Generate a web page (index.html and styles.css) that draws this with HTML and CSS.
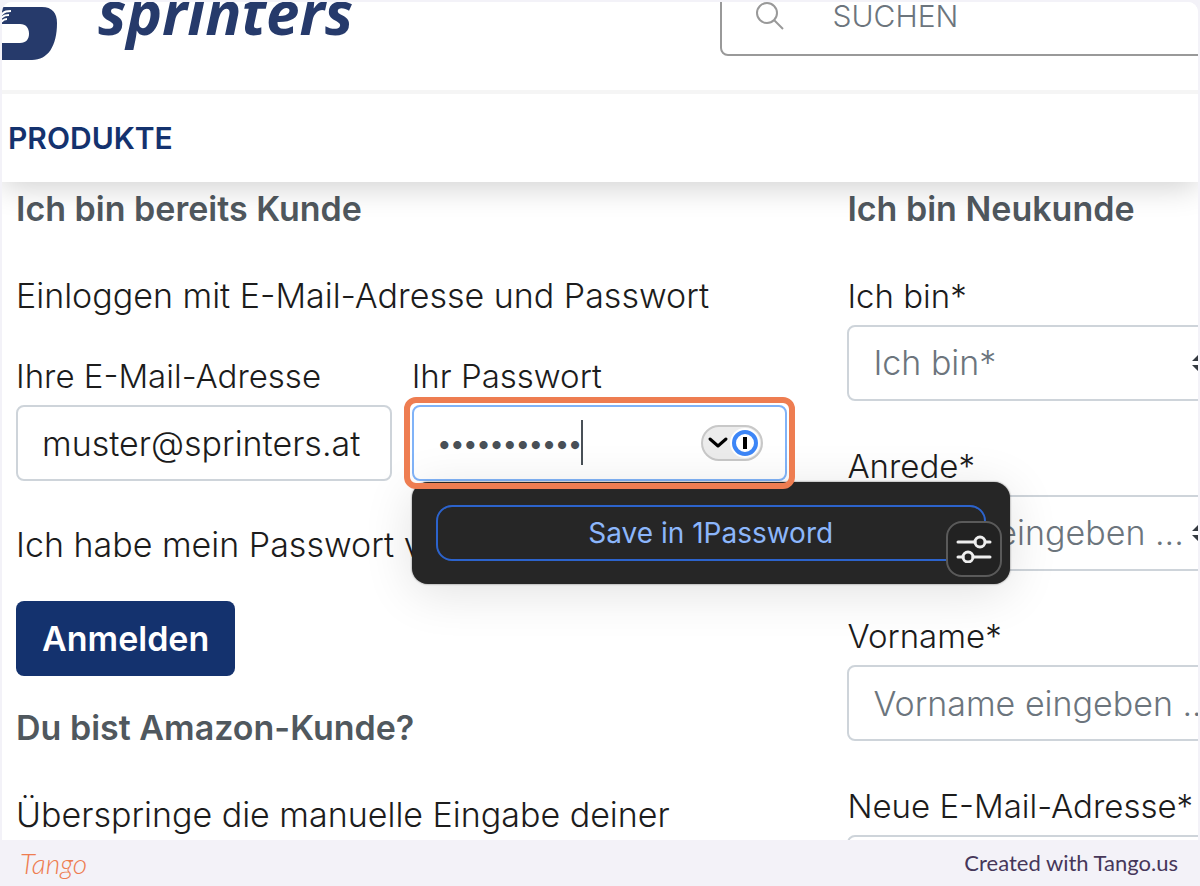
FILE: index.html
```html
<!DOCTYPE html>
<html lang="de">
<head>
  <meta charset="UTF-8">
  <meta name="viewport" content="width=device-width, initial-scale=1.0">
  <title>Sprinters - Anmelden</title>
  <link rel="stylesheet" href="styles.css">
</head>
<body>

  <div class="page">

    <!-- Header -->
    <header class="header">
      <a href="#" class="logo">
        <svg class="logo-mark" width="56" height="56" viewBox="0 0 56 56" aria-hidden="true">
          <path fill="#263a6b" d="M0 1 H40 C50 1 55 7 55 17 C55 40 46 54 30 54 H0 V37 H18 C24 37 27 33 27 28 C27 22 24 18 18 18 H0 Z"/>
          <path fill="none" stroke="#fff" stroke-width="2" d="M-1 9 C3 5 5 5 9 5 M-1 12 C3 9 4 9 7 9 M-1 16 C2 13 3 13 5 13"/>
        </svg>
        <span class="logo-text">sprinters</span>
      </a>
      <div class="search">
        <svg width="30" height="30" viewBox="0 0 30 30" fill="none" stroke="#999" stroke-width="2" aria-hidden="true">
          <circle cx="12" cy="12" r="10"/>
          <path d="M19 19 L28 28"/>
        </svg>
        <input type="search" class="search-input" placeholder="SUCHEN" aria-label="Suchen">
      </div>
    </header>

    <nav class="nav">
      <a href="#">PRODUKTE</a>
    </nav>

    <main class="content">

      <!-- Login -->
      <section class="login">
        <h2>Ich bin bereits Kunde</h2>
        <p class="intro">Einloggen mit E-Mail-Adresse und Passwort</p>

        <form class="login-form">
          <div class="login-fields">
            <div class="field">
              <label for="email">Ihre E-Mail-Adresse</label>
              <input type="email" id="email" class="control" value="muster@sprinters.at">
            </div>

            <div class="field">
              <label for="password">Ihr Passwort</label>
              <div class="password-box">
                <input type="password" id="password" class="control password" value="abcdefghijk">
                <span class="caret"></span>
                <button type="button" class="op-toggle" aria-label="1Password">
                  <svg width="62" height="36" viewBox="0 0 62 36" fill="none">
                    <rect x="1" y="1" width="60" height="34" rx="17" fill="#ececec" stroke="#c8c8c8" stroke-width="2"/>
                    <path d="M9 14 L17 21 L25 14" stroke="#000" stroke-width="3" stroke-linecap="round" stroke-linejoin="round"/>
                    <circle cx="44" cy="18" r="15" fill="#fff"/>
                    <circle cx="44" cy="18" r="11" stroke="#3d86f7" stroke-width="4"/>
                    <rect x="42" y="12" width="4" height="12" fill="#000"/>
                  </svg>
                </button>

                <div class="op-menu">
                  <button type="button" class="op-save">Save in 1Password</button>
                  <button type="button" class="op-settings" aria-label="Settings">
                    <svg width="36" height="28" viewBox="0 0 36 28" fill="none" stroke="#eee" stroke-width="3" stroke-linecap="round">
                      <path d="M2 7 H19 M30 7 H34 M2 22 H7 M17 22 H34"/>
                      <circle cx="24" cy="7" r="5"/>
                      <circle cx="12" cy="22" r="5"/>
                    </svg>
                  </button>
                </div>
                <span class="highlight"></span>
              </div>
            </div>
          </div>

          <p class="forgot">Ich habe mein Passwort vergessen</p>
          <button type="submit" class="submit">Anmelden</button>
        </form>

        <h2 class="amazon">Du bist Amazon-Kunde?</h2>
        <p>Überspringe die manuelle Eingabe deiner</p>
      </section>

      <!-- Registration -->
      <section class="register">
        <h2>Ich bin Neukunde</h2>

        <form class="register-form">
          <div class="field">
            <label for="type">Ich bin*</label>
            <div class="select-box">
              <select id="type" class="control">
                <option>Ich bin*</option>
              </select>
              <svg class="arrows" width="16" height="20" viewBox="0 0 16 20" fill="#343a40" aria-hidden="true">
                <path d="M0 8 L8 0 L16 8 Z M0 12 L8 20 L16 12 Z"/>
              </svg>
            </div>
          </div>
          <div class="field">
            <label for="salutation">Anrede*</label>
            <div class="select-box">
              <select id="salutation" class="control">
                <option>Anrede eingeben ...</option>
              </select>
              <svg class="arrows" width="16" height="20" viewBox="0 0 16 20" fill="#343a40" aria-hidden="true">
                <path d="M0 8 L8 0 L16 8 Z M0 12 L8 20 L16 12 Z"/>
              </svg>
            </div>
          </div>
          <div class="field">
            <label for="firstname">Vorname*</label>
            <input type="text" id="firstname" class="control" placeholder="Vorname eingeben ...">
          </div>
          <div class="field">
            <label for="newmail">Neue E-Mail-Adresse*</label>
            <input type="email" id="newmail" class="control">
          </div>
        </form>
      </section>

    </main>
  </div>

  <footer class="footer">
    <span class="tango">Tango</span>
    <span class="credit">Created with Tango.us</span>
  </footer>

</body>
</html>
```
FILE: styles.css
```css
* {
  box-sizing: border-box;
}

body {
  margin: 0;
  height: 100vh;
  display: flex;
  flex-direction: column;
  background-color: #f3f2f8;
  font-family: "Inter", sans-serif;
  font-size: 34px;
  font-weight: 300;
  line-height: 48px;
  color: #1c1c1c;
}

h2, p {
  margin: 0;
  white-space: nowrap;
}

h2 {
  font-size: 34px;
  font-weight: 600;
  color: #50585e;
}

input, select, button {
  font: inherit;
  color: inherit;
}

.page {
  flex: 1;
  min-height: 0;
  margin: 2px 2px 0;
  border-radius: 10px 10px 0 0;
  background-color: #fff;
  overflow: hidden;
}

/* Header */
.header {
  position: relative;
  z-index: 1;
  display: grid;
  grid-template-columns: 3fr 2fr;
  align-items: end;
  align-content: end;
  height: 92px;
  padding-bottom: 28px;
  border-bottom: 4px solid #f5f5f5;
  background-color: #fff;
}

.logo {
  display: flex;
  align-items: flex-end;
  gap: 40px;
  color: #263a6b;
  text-decoration: none;
}

.logo-text {
  font-family: "Open Sans", sans-serif;
  font-size: 60px;
  font-weight: 700;
  font-style: italic;
  line-height: 100px;
}

.search {
  display: flex;
  align-items: center;
  gap: 48px;
  min-width: 0;
  height: 80px;
  margin: 0 -8px 6px 0;
  padding-left: 33px;
  border: 2px solid #999;
  border-radius: 8px;
}

.search-input {
  flex: 1;
  min-width: 0;
  padding: 0;
  border: none;
  outline: none;
  background: none;
  font-size: 30px;
}

.search-input::placeholder {
  color: #6c757d;
  opacity: 1;
}

.nav {
  position: relative;
  height: 88px;
  padding: 19px 6px;
  background-color: #fff;
  box-shadow: 0 4px 32px rgba(0, 0, 0, 0.2);
}

.nav a {
  color: #14326e;
  font-size: 30px;
  font-weight: 600;
  text-decoration: none;
}

/* Columns */
.content {
  display: grid;
  grid-template-columns: 11fr 5fr;
  gap: 60px;
  padding: 3px 0 0 14px;
}

.login, .register {
  min-width: 0;
}

.field label {
  display: block;
  margin-bottom: 5px;
  font-size: 33px;
  white-space: nowrap;
}

.control {
  display: block;
  width: 100%;
  height: 76px;
  padding: 0 24px;
  border: 2px solid #ced4da;
  border-radius: 8px;
  background-color: #fff;
  outline: none;
}

.intro {
  margin: 39px 0 32px;
}

.login-fields {
  display: grid;
  grid-template-columns: 1fr 1fr;
  gap: 20px;
}

.forgot {
  margin: 40px 0 32px;
}

.submit {
  height: 75px;
  padding: 0 26px;
  border: none;
  border-radius: 8px;
  background-color: #14326e;
  color: #fff;
  font-weight: 600;
}

.amazon {
  margin: 28px 0 39px;
}

/* Password field with 1Password menu */
.password-box {
  position: relative;
}

.password {
  border-color: #80b3f8;
  color: #495057;
  font-size: 26px;
  font-weight: 600;
}

.caret {
  position: absolute;
  top: 15px;
  left: 169px;
  width: 2px;
  height: 45px;
  background-color: #495057;
}

.op-toggle {
  position: absolute;
  top: 20px;
  right: 24px;
  display: flex;
  padding: 0;
  border: none;
  background: none;
}

.op-menu {
  position: absolute;
  z-index: 1;
  top: 77px;
  left: 0;
  width: 598px;
  padding: 23px 24px;
  border-radius: 16px;
  background-color: #262626;
  box-shadow: 0 0 2px rgba(0, 0, 0, 0.6), 0 8px 50px rgba(0, 0, 0, 0.12);
}

.op-save {
  display: block;
  width: 100%;
  height: 56px;
  border: 2px solid #2c63cc;
  border-radius: 16px;
  background: none;
  color: #8cb6fb;
  font-family: "Inter", sans-serif;
  font-size: 28px;
  font-weight: 400;
}

.op-settings {
  position: absolute;
  right: 8px;
  bottom: 7px;
  display: flex;
  align-items: center;
  justify-content: center;
  width: 56px;
  height: 56px;
  padding: 0;
  border: 2px solid #5a5a5a;
  border-radius: 16px;
  background-color: #222;
}

.highlight {
  position: absolute;
  z-index: 2;
  inset: -8px;
  border: 6px solid #ee7d51;
  border-radius: 12px;
  pointer-events: none;
}

/* Registration */
.register-form {
  display: flex;
  flex-direction: column;
  gap: 41px;
  margin: 39px -34px 0 0;
}

.register .control {
  color: #6c757d;
}

.register .control::placeholder {
  color: #6c757d;
  opacity: 1;
}

.select-box {
  position: relative;
}

.select-box select {
  appearance: none;
}

.arrows {
  position: absolute;
  top: 28px;
  right: 24px;
  pointer-events: none;
}

/* Footer */
.footer {
  display: flex;
  align-items: center;
  justify-content: space-between;
  height: 46px;
  padding: 0 22px 0 20px;
  font-family: "Lato", sans-serif;
  font-size: 22px;
  font-weight: 400;
  line-height: 44px;
  color: #46375a;
}

.tango {
  color: #ee7d51;
  font-size: 28px;
  font-style: italic;
  font-weight: 300;
}
```
